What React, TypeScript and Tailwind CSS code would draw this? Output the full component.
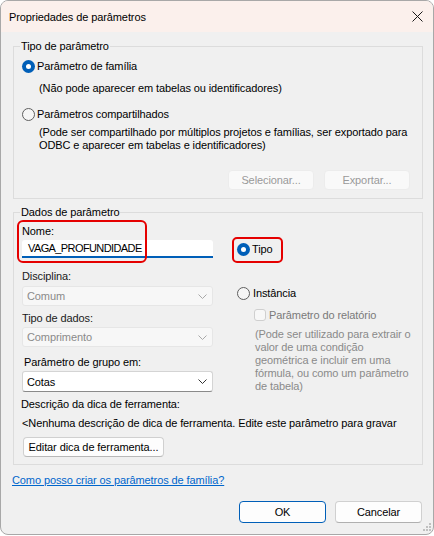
import React from "react";

function Radio({ checked }: { checked?: boolean }) {
  return checked ? (
    <span className="flex h-[13px] w-[13px] shrink-0 items-center justify-center rounded-full bg-[#005fb8]">
      <span className="h-[5px] w-[5px] rounded-full bg-white" />
    </span>
  ) : (
    <span className="h-[13px] w-[13px] shrink-0 rounded-full border border-[#5f5f5f] bg-[#f6f6f6]" />
  );
}

function Chevron({ color }: { color: string }) {
  return (
    <svg width="9" height="5" viewBox="0 0 9 5" className="shrink-0">
      <path d="M0.5 0.5 L4.5 4.5 L8.5 0.5" fill="none" stroke={color} strokeWidth="1" />
    </svg>
  );
}

function Combo({ text, disabled }: { text: string; disabled?: boolean }) {
  return disabled ? (
    <div className="flex h-[20px] w-[191px] items-center justify-between rounded-[3px] border border-[#e6e6e6] bg-[#f7f7f7] pl-[4px] pr-[5px] text-[#8a8a8a]">
      <span>{text}</span>
      <Chevron color="#a8a8a8" />
    </div>
  ) : (
    <div className="flex h-[21px] w-[191px] items-center justify-between rounded-[3px] border border-[#d4d4d4] border-b-[#8a8a8a] bg-white pl-[4px] pr-[5px]">
      <span>{text}</span>
      <Chevron color="#333333" />
    </div>
  );
}

export default function App() {
  return (
    <div className="relative h-[536px] w-[434px] bg-white font-['Liberation_Sans',Arial,sans-serif] text-[11px] leading-[14px] tracking-[-0.1px] text-black">
      <div className="flex h-[535px] w-[434px] flex-col overflow-hidden rounded-[8px] border border-[#a8a8a8] bg-[#f0f0f0]">
        {/* Title bar */}
        <div className="flex h-[31px] shrink-0 items-center justify-between bg-[#fbf0ec] pl-[8px] pr-[10px]">
          <span>Propriedades de parâmetros</span>
          <svg width="11" height="11" viewBox="0 0 11 11">
            <path d="M0.5 0.5 L10.5 10.5 M10.5 0.5 L0.5 10.5" stroke="#1a1a1a" strokeWidth="1" fill="none" />
          </svg>
        </div>

        <div className="flex flex-1 flex-col">
          {/* Tipo de parâmetro */}
          <fieldset className="ml-[12px] mt-[7px] w-[410px] border border-[#dcdcdc] pb-[8px]">
            <legend className="ml-[6px] px-[1px] leading-[14px]">Tipo de parâmetro</legend>
            <div className="pl-[8px]">
              <div className="mt-[6px] flex h-[14px] items-center gap-[2px]">
                <Radio checked />
                <span>Parâmetro de família</span>
              </div>
              <div className="mt-[8px] h-[14px] pl-[17px]">(Não pode aparecer em tabelas ou identificadores)</div>
              <div className="mt-[12px] flex h-[14px] items-center gap-[2px]">
                <Radio />
                <span>Parâmetros compartilhados</span>
              </div>
              <div className="mt-[5px] whitespace-nowrap pl-[17px] leading-[13px]">
                (Pode ser compartilhado por múltiplos projetos e famílias, ser exportado para
                <br />
                ODBC e aparecer em tabelas e identificadores)
              </div>
              <div className="mt-[18px] flex justify-end gap-[10px] pr-[12px]">
                <div className="flex h-[20px] w-[86px] items-center justify-center rounded-[4px] border border-[#ececec] bg-[#f9f9f9] text-[#9a9a9a]">
                  Selecionar...
                </div>
                <div className="flex h-[20px] w-[86px] items-center justify-center rounded-[4px] border border-[#ececec] bg-[#f9f9f9] text-[#9a9a9a]">
                  Exportar...
                </div>
              </div>
            </div>
          </fieldset>

          {/* Dados de parâmetro */}
          <fieldset className="ml-[12px] mt-[6px] w-[410px] border border-[#dcdcdc] pb-[7px]">
            <legend className="ml-[6px] px-[1px] leading-[14px]">Dados de parâmetro</legend>
            <div className="flex">
              <div className="ml-[8px] flex w-[191px] flex-col">
                <div className="mt-[5px] h-[14px]">Nome:</div>
                <div className="mt-[2px] flex h-[18px] w-[191px] items-center rounded-t-[3px] border-b-2 border-[#005fb8] bg-white pl-[6px] tracking-[-0.6px]">
                  VAGA_PROFUNDIDADE
                </div>
                <div className="mt-[11px] h-[14px] text-[#1a1a1a]">Disciplina:</div>
                <div className="mt-[3px]">
                  <Combo text="Comum" disabled />
                </div>
                <div className="mt-[5px] h-[14px] text-[#1a1a1a]">Tipo de dados:</div>
                <div className="mt-[2px]">
                  <Combo text="Comprimento" disabled />
                </div>
                <div className="mt-[8px] h-[14px] pl-[2px]">Parâmetro de grupo em:</div>
                <div className="mt-[2px]">
                  <Combo text="Cotas" />
                </div>
              </div>
              <div className="ml-[24px] flex flex-col">
                <div className="mt-[23px] flex h-[14px] items-center gap-[2px]">
                  <Radio checked />
                  <span>Tipo</span>
                </div>
                <div className="mt-[30px] flex h-[14px] items-center gap-[3px]">
                  <Radio />
                  <span>Instância</span>
                </div>
                <div className="mt-[8px] flex h-[14px] items-center gap-[3px] pl-[17px] text-[#7a7a7a]">
                  <span className="h-[12px] w-[12px] shrink-0 rounded-[3px] border border-[#cfcfcf] bg-[#f7f7f7]" />
                  <span>Parâmetro do relatório</span>
                </div>
                <div className="mt-[6px] whitespace-nowrap pl-[18px] leading-[13px] text-[#8a8a8a]">
                  (Pode ser utilizado para extrair o
                  <br />
                  valor de uma condição
                  <br />
                  geométrica e incluir em uma
                  <br />
                  fórmula, ou como um parâmetro
                  <br />
                  de tabela)
                </div>
              </div>
            </div>
            <div className="mt-[4px] h-[14px] pl-[7px]">Descrição da dica de ferramenta:</div>
            <div className="mt-[5px] h-[14px] overflow-hidden whitespace-nowrap pl-[8px]">
              &lt;Nenhuma descrição de dica de ferramenta. Edite este parâmetro para gravar
            </div>
            <div className="ml-[9px] mt-[7px] flex h-[20px] w-[141px] items-center justify-center whitespace-nowrap rounded-[4px] border border-[#d0d0d0] border-b-[#b8b8b8] bg-[#fdfdfd]">
              Editar dica de ferramenta...
            </div>
          </fieldset>

          <div className="ml-[11px] mt-[8px] h-[14px]">
            <span className="text-[#0066cc] underline">Como posso criar os parâmetros de família?</span>
          </div>

          <div className="mt-[14px] flex justify-end gap-[9px] pr-[11px]">
            <div className="flex h-[22px] w-[87px] items-center justify-center rounded-[4px] border border-[#005fb8] bg-[#fdfdfd]">
              OK
            </div>
            <div className="flex h-[22px] w-[87px] items-center justify-center rounded-[4px] border border-[#d0d0d0] border-b-[#b0b0b0] bg-[#fdfdfd]">
              Cancelar
            </div>
          </div>
        </div>
      </div>

      {/* resize grip */}
      <svg className="absolute left-[423px] top-[523px]" width="9" height="9" viewBox="0 0 9 9">
        <rect x="6" y="0" width="2" height="2" fill="#c0c0c0" />
        <rect x="3" y="3" width="2" height="2" fill="#c0c0c0" />
        <rect x="6" y="3" width="2" height="2" fill="#c0c0c0" />
        <rect x="0" y="6" width="2" height="2" fill="#c0c0c0" />
        <rect x="3" y="6" width="2" height="2" fill="#c0c0c0" />
        <rect x="6" y="6" width="2" height="2" fill="#c0c0c0" />
      </svg>

      {/* red highlight boxes */}
      <div className="pointer-events-none absolute left-[17px] top-[220px] h-[43px] w-[130px] rounded-[6px] border-2 border-[#e50000]" />
      <div className="pointer-events-none absolute left-[232px] top-[237px] h-[26px] w-[51px] rounded-[5px] border-2 border-[#e50000]" />
    </div>
  );
}
